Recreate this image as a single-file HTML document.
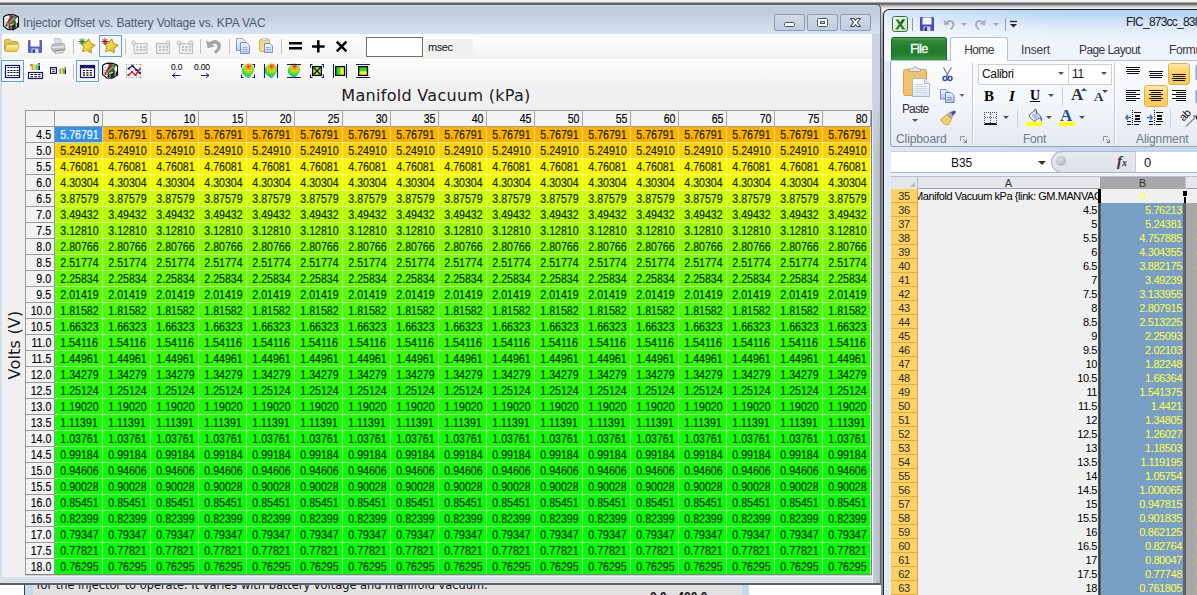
<!DOCTYPE html>
<html><head><meta charset="utf-8"><title>Injector Offset</title>
<style>
*{box-sizing:border-box;margin:0;padding:0}
html,body{width:1197px;height:595px;overflow:hidden;background:#f1f1f1;font-family:"Liberation Sans",sans-serif;font-size:12px;color:#000}
.abs{position:absolute}
#lw{position:absolute;left:-1px;top:3px;width:882px;height:582px;background:#5c6063;border-radius:0 5px 0 0;}
#lwin{position:absolute;left:0;top:5px;width:880px;height:578px;border-radius:0 4px 0 0;background:linear-gradient(#dde4ed 0,#c2ccdb 1.500px,#bfcdd9 8px,#c8d4e2 15px,#d1dce9 22px,#d7e3f0 29px,#d3deeb 30px,#d5e0ed 100%);}
#ltitle{position:absolute;left:23px;top:11px;font-size:12px;color:#4a5a72;letter-spacing:-0.15px;white-space:nowrap}
.wb{position:absolute;top:9px;width:31px;height:17px;border:1px solid #8a9bb4;border-radius:2px;background:linear-gradient(#cfdae8,#c0cee0)}
#lclient{position:absolute;left:2px;top:29px;width:870px;height:543px;background:#f0f0f0}
#tb1{position:absolute;left:0;top:0;width:870px;height:25px;background:linear-gradient(#fdfdfd,#f3f3f3)}
#tb2{position:absolute;left:0;top:25px;width:870px;height:25px;background:linear-gradient(#fdfdfd,#f3f3f3)}
#mvtitle{position:absolute;left:-1.500px;width:871px;top:52px;letter-spacing:0.3px;text-align:center;font-family:"DejaVu Sans",sans-serif;font-size:16px;color:#1a1a1a}
#volts{position:absolute;left:-27px;top:301px;letter-spacing:0.2px;width:80px;height:20px;text-align:center;transform:rotate(-90deg);font-family:"DejaVu Sans",sans-serif;font-size:16px;color:#1a1a1a;white-space:nowrap}
#grid{position:absolute;left:23px;top:76px;width:846px;height:465px;border-left:1px solid #9a9a9a;border-top:1px solid #9a9a9a;background:#f0f0f0}
.hr,.r{display:flex;height:16px}
.rl{width:29px;height:16px;border-right:1px solid #9a9a9a;border-bottom:1px solid #9a9a9a;background:#f2f2f2;text-align:right;padding-right:3px;line-height:15px;font-size:12px;letter-spacing:-0.2px}
.ch{width:48px;height:16px;border-right:1px solid #a8a8a8;border-bottom:1px solid #9a9a9a;text-align:right;padding-right:3px;line-height:15px;font-size:12px;background:#f4f4f4}
.c{width:48px;height:16px;border-right:1px solid rgba(255,255,255,.62);border-bottom:1px solid rgba(255,255,255,.62);text-align:center;line-height:15px;font-size:12px;letter-spacing:-0.25px;color:#0a1a00;padding-left:1px}
#grid b{display:inline-block;font-weight:normal;font-size:13px;transform:scaleX(.815);transform-origin:50% 50%;letter-spacing:0;-webkit-text-stroke:0.15px currentColor}
.rl b,.ch b{transform-origin:100% 50% !important}
.c.sel{background:#3390ea;color:#fff}
#below{position:absolute;left:0;top:585px;width:881px;height:10px;background:#fff;overflow:hidden}
/* excel */
#xw{position:absolute;left:883px;top:9px;width:330px;height:600px;background:#1e242c;border-radius:6px 0 0 0}
#xwin{position:absolute;left:884px;top:10px;width:330px;height:600px;border-radius:5px 0 0 0;background:linear-gradient(90deg,rgba(255,255,255,.45) 0,rgba(255,255,255,0) 190px),linear-gradient(#b3d1f4 0,#bcd7f5 5px,#d3e4f8 13px,#e6effa 22px,#eef4fb 32px,#eef4fb 50px,#c3d9f1 52px,#c0d8f0 100%)}
.xr{position:absolute;left:891px;width:306px;height:14px}
.xn{position:absolute;left:0;top:0;width:27px;height:14px;background:#fcd265;border-bottom:1px solid #dfae45;border-right:1px solid #d9a43a;text-align:center;font-size:11px;line-height:14px;color:#2a2a2a;letter-spacing:-0.3px}
.xa{position:absolute;left:27px;top:0;width:180px;height:14px;background:#f0f0f0;text-align:right;font-size:11px;line-height:14px;white-space:nowrap;overflow:hidden;letter-spacing:-0.4px;padding-right:1px}
.xb{position:absolute;left:207px;top:0;width:99px;height:14px;background:#a8a8a8;}
.xb b{position:absolute;left:0;top:0;width:85px;height:14px;background:#7a9fc6;color:#ffff3c;text-align:right;font-weight:normal;font-size:11px;line-height:14px;letter-spacing:-0.4px;padding-right:1px}
.xb i{position:absolute;left:98.500px;top:0;font-style:normal;font-size:11px;line-height:14px;color:#ffff3c;letter-spacing:-0.4px;-webkit-text-stroke:0.4px #ffff3c}
.xr.first .xb{background:#f0f0f0}
.xr.first .xb b{background:#f0f0f0;text-align:center;padding-left:5px;padding-right:0}
.xb b{position:absolute;left:0;top:0;width:85px;height:14px;background:#7a9fc6;color:#ffff3c;text-align:right;font-weight:normal;font-size:11px;line-height:14px;letter-spacing:-0.4px;padding-right:1px}
.xr.first .xa{text-align:left;text-indent:-4px;letter-spacing:-0.42px}

#xtitle{position:absolute;left:1126px;top:15px;font-size:12px;color:#1a1a1a;white-space:nowrap;letter-spacing:-0.78px}
#xfile{position:absolute;left:891px;top:37px;width:56px;height:23px;border-radius:3px 3px 0 0;background:linear-gradient(#55a557 0,#2f8a38 3px,#1f7a2c 12px,#237f30 16px,#3c9a44 23px);border:1px solid #1c6a27;border-bottom:none;color:#fff;font-size:12px;font-weight:normal;text-align:center;line-height:23px;letter-spacing:-0.45px;-webkit-text-stroke:0.35px #fff}
#xhome{position:absolute;left:950px;top:37px;width:58px;height:24px;border-radius:3px 3px 0 0;background:#fafcfe;border:1px solid #b4c2d3;border-bottom:none;color:#3a3a3a;font-size:12px;text-align:center;line-height:24px;letter-spacing:-0.6px}
.xtab{position:absolute;top:39px;color:#3a3a3a;font-size:12px;line-height:22px;white-space:nowrap;letter-spacing:0.15px}
#ribbon{position:absolute;left:890px;top:60px;width:320px;height:87px;border:1px solid #98a3b3;border-top-color:#b4c2d3;border-radius:3px 0 0 3px;background:linear-gradient(#fbfcfe 0,#f3f6fa 40px,#e8edf4 75px,#e3e9f1 87px)}
.gsep{position:absolute;top:63px;width:2px;height:82px;background:linear-gradient(90deg,#c3cad4 50%,#fff 50%)}
.glab{position:absolute;top:131.500px;font-size:12px;color:#6e7888;line-height:15px;letter-spacing:0.25px;white-space:nowrap}
.combo{position:absolute;top:64px;height:21px;border:1px solid #c9d0da;background:#fff;font-size:12px;line-height:19px;padding-left:3px;color:#111;letter-spacing:-0.34px}
.darr{position:absolute;width:0;height:0;border-left:3px solid transparent;border-right:3px solid transparent;border-top:3px solid #555}
.hl{position:absolute;border:1px solid #e3b14a;border-radius:3px;background:linear-gradient(#fde9a9,#fdd36a 40%,#fcc94f)}
.ln{position:absolute;height:1px;background:#111}
#fbar{position:absolute;left:891px;top:151px;width:320px;height:22px;background:#fff;border-top:1px solid #c9d2de;border-bottom:1px solid #a9b4c3}
#pill{position:absolute;left:1051px;top:151px;width:85px;height:22px;background:linear-gradient(#e6e9ee,#dde1e8);border:1px solid #aeb6c3;border-right:1px solid #c8ccd4;border-radius:11px 0 0 11px}
#colh{position:absolute;left:891px;top:176px;width:320px;height:13px;background:#e4e6ea;border-top:1px solid #b9c0cb;border-bottom:1px solid #9aa3b0}
#desc{position:absolute;left:3.500px;top:-7px;font-family:"DejaVu Sans",sans-serif;font-size:11.4px;line-height:14px;white-space:nowrap;color:#111}
</style></head><body>
<!-- top dark line -->
<div class="abs" style="left:0;top:2px;width:1197px;height:3px;background:linear-gradient(#dcdcdc,#5c6063 40%,#64686b 70%,#8a8e92)"></div>
<div class="abs" style="left:881px;top:5px;width:316px;height:5px;background:linear-gradient(#9a9a9a,#d4d4d4 40%,#f6f6f6 80%,#fafafa)"></div>
<div id="lw"></div>
<div id="lwin">
 <div id="ltitle">Injector Offset vs. Battery Voltage vs. KPA VAC</div>
 <div class="wb" style="left:774px"></div><div class="wb" style="left:807px"></div><div class="wb" style="left:840px"></div>
 <div id="lclient">
  <div id="tb1"></div><div id="tb2"></div>
  <div id="mvtitle">Manifold Vacuum (kPa)</div>
  <div id="volts">Volts (V)</div>
  <div id="grid">
<div class="hr"><div class="rl"></div><div class="ch"><b>0</b></div><div class="ch"><b>5</b></div><div class="ch"><b>10</b></div><div class="ch"><b>15</b></div><div class="ch"><b>20</b></div><div class="ch"><b>25</b></div><div class="ch"><b>30</b></div><div class="ch"><b>35</b></div><div class="ch"><b>40</b></div><div class="ch"><b>45</b></div><div class="ch"><b>50</b></div><div class="ch"><b>55</b></div><div class="ch"><b>60</b></div><div class="ch"><b>65</b></div><div class="ch"><b>70</b></div><div class="ch"><b>75</b></div><div class="ch"><b>80</b></div></div>
<div class="r" style="background:#ffb300"><div class="rl"><b>4.5</b></div><div class="c sel"><b>5.76791</b></div><div class="c"><b>5.76791</b></div><div class="c"><b>5.76791</b></div><div class="c"><b>5.76791</b></div><div class="c"><b>5.76791</b></div><div class="c"><b>5.76791</b></div><div class="c"><b>5.76791</b></div><div class="c"><b>5.76791</b></div><div class="c"><b>5.76791</b></div><div class="c"><b>5.76791</b></div><div class="c"><b>5.76791</b></div><div class="c"><b>5.76791</b></div><div class="c"><b>5.76791</b></div><div class="c"><b>5.76791</b></div><div class="c"><b>5.76791</b></div><div class="c"><b>5.76791</b></div><div class="c"><b>5.76791</b></div></div>
<div class="r" style="background:#ffd500"><div class="rl"><b>5.0</b></div><div class="c"><b>5.24910</b></div><div class="c"><b>5.24910</b></div><div class="c"><b>5.24910</b></div><div class="c"><b>5.24910</b></div><div class="c"><b>5.24910</b></div><div class="c"><b>5.24910</b></div><div class="c"><b>5.24910</b></div><div class="c"><b>5.24910</b></div><div class="c"><b>5.24910</b></div><div class="c"><b>5.24910</b></div><div class="c"><b>5.24910</b></div><div class="c"><b>5.24910</b></div><div class="c"><b>5.24910</b></div><div class="c"><b>5.24910</b></div><div class="c"><b>5.24910</b></div><div class="c"><b>5.24910</b></div><div class="c"><b>5.24910</b></div></div>
<div class="r" style="background:#fff500"><div class="rl"><b>5.5</b></div><div class="c"><b>4.76081</b></div><div class="c"><b>4.76081</b></div><div class="c"><b>4.76081</b></div><div class="c"><b>4.76081</b></div><div class="c"><b>4.76081</b></div><div class="c"><b>4.76081</b></div><div class="c"><b>4.76081</b></div><div class="c"><b>4.76081</b></div><div class="c"><b>4.76081</b></div><div class="c"><b>4.76081</b></div><div class="c"><b>4.76081</b></div><div class="c"><b>4.76081</b></div><div class="c"><b>4.76081</b></div><div class="c"><b>4.76081</b></div><div class="c"><b>4.76081</b></div><div class="c"><b>4.76081</b></div><div class="c"><b>4.76081</b></div></div>
<div class="r" style="background:#eaff00"><div class="rl"><b>6.0</b></div><div class="c"><b>4.30304</b></div><div class="c"><b>4.30304</b></div><div class="c"><b>4.30304</b></div><div class="c"><b>4.30304</b></div><div class="c"><b>4.30304</b></div><div class="c"><b>4.30304</b></div><div class="c"><b>4.30304</b></div><div class="c"><b>4.30304</b></div><div class="c"><b>4.30304</b></div><div class="c"><b>4.30304</b></div><div class="c"><b>4.30304</b></div><div class="c"><b>4.30304</b></div><div class="c"><b>4.30304</b></div><div class="c"><b>4.30304</b></div><div class="c"><b>4.30304</b></div><div class="c"><b>4.30304</b></div><div class="c"><b>4.30304</b></div></div>
<div class="r" style="background:#ceff00"><div class="rl"><b>6.5</b></div><div class="c"><b>3.87579</b></div><div class="c"><b>3.87579</b></div><div class="c"><b>3.87579</b></div><div class="c"><b>3.87579</b></div><div class="c"><b>3.87579</b></div><div class="c"><b>3.87579</b></div><div class="c"><b>3.87579</b></div><div class="c"><b>3.87579</b></div><div class="c"><b>3.87579</b></div><div class="c"><b>3.87579</b></div><div class="c"><b>3.87579</b></div><div class="c"><b>3.87579</b></div><div class="c"><b>3.87579</b></div><div class="c"><b>3.87579</b></div><div class="c"><b>3.87579</b></div><div class="c"><b>3.87579</b></div><div class="c"><b>3.87579</b></div></div>
<div class="r" style="background:#b5ff00"><div class="rl"><b>7.0</b></div><div class="c"><b>3.49432</b></div><div class="c"><b>3.49432</b></div><div class="c"><b>3.49432</b></div><div class="c"><b>3.49432</b></div><div class="c"><b>3.49432</b></div><div class="c"><b>3.49432</b></div><div class="c"><b>3.49432</b></div><div class="c"><b>3.49432</b></div><div class="c"><b>3.49432</b></div><div class="c"><b>3.49432</b></div><div class="c"><b>3.49432</b></div><div class="c"><b>3.49432</b></div><div class="c"><b>3.49432</b></div><div class="c"><b>3.49432</b></div><div class="c"><b>3.49432</b></div><div class="c"><b>3.49432</b></div><div class="c"><b>3.49432</b></div></div>
<div class="r" style="background:#9dff00"><div class="rl"><b>7.5</b></div><div class="c"><b>3.12810</b></div><div class="c"><b>3.12810</b></div><div class="c"><b>3.12810</b></div><div class="c"><b>3.12810</b></div><div class="c"><b>3.12810</b></div><div class="c"><b>3.12810</b></div><div class="c"><b>3.12810</b></div><div class="c"><b>3.12810</b></div><div class="c"><b>3.12810</b></div><div class="c"><b>3.12810</b></div><div class="c"><b>3.12810</b></div><div class="c"><b>3.12810</b></div><div class="c"><b>3.12810</b></div><div class="c"><b>3.12810</b></div><div class="c"><b>3.12810</b></div><div class="c"><b>3.12810</b></div><div class="c"><b>3.12810</b></div></div>
<div class="r" style="background:#87ff00"><div class="rl"><b>8.0</b></div><div class="c"><b>2.80766</b></div><div class="c"><b>2.80766</b></div><div class="c"><b>2.80766</b></div><div class="c"><b>2.80766</b></div><div class="c"><b>2.80766</b></div><div class="c"><b>2.80766</b></div><div class="c"><b>2.80766</b></div><div class="c"><b>2.80766</b></div><div class="c"><b>2.80766</b></div><div class="c"><b>2.80766</b></div><div class="c"><b>2.80766</b></div><div class="c"><b>2.80766</b></div><div class="c"><b>2.80766</b></div><div class="c"><b>2.80766</b></div><div class="c"><b>2.80766</b></div><div class="c"><b>2.80766</b></div><div class="c"><b>2.80766</b></div></div>
<div class="r" style="background:#74ff00"><div class="rl"><b>8.5</b></div><div class="c"><b>2.51774</b></div><div class="c"><b>2.51774</b></div><div class="c"><b>2.51774</b></div><div class="c"><b>2.51774</b></div><div class="c"><b>2.51774</b></div><div class="c"><b>2.51774</b></div><div class="c"><b>2.51774</b></div><div class="c"><b>2.51774</b></div><div class="c"><b>2.51774</b></div><div class="c"><b>2.51774</b></div><div class="c"><b>2.51774</b></div><div class="c"><b>2.51774</b></div><div class="c"><b>2.51774</b></div><div class="c"><b>2.51774</b></div><div class="c"><b>2.51774</b></div><div class="c"><b>2.51774</b></div><div class="c"><b>2.51774</b></div></div>
<div class="r" style="background:#63ff00"><div class="rl"><b>9.0</b></div><div class="c"><b>2.25834</b></div><div class="c"><b>2.25834</b></div><div class="c"><b>2.25834</b></div><div class="c"><b>2.25834</b></div><div class="c"><b>2.25834</b></div><div class="c"><b>2.25834</b></div><div class="c"><b>2.25834</b></div><div class="c"><b>2.25834</b></div><div class="c"><b>2.25834</b></div><div class="c"><b>2.25834</b></div><div class="c"><b>2.25834</b></div><div class="c"><b>2.25834</b></div><div class="c"><b>2.25834</b></div><div class="c"><b>2.25834</b></div><div class="c"><b>2.25834</b></div><div class="c"><b>2.25834</b></div><div class="c"><b>2.25834</b></div></div>
<div class="r" style="background:#53ff00"><div class="rl"><b>9.5</b></div><div class="c"><b>2.01419</b></div><div class="c"><b>2.01419</b></div><div class="c"><b>2.01419</b></div><div class="c"><b>2.01419</b></div><div class="c"><b>2.01419</b></div><div class="c"><b>2.01419</b></div><div class="c"><b>2.01419</b></div><div class="c"><b>2.01419</b></div><div class="c"><b>2.01419</b></div><div class="c"><b>2.01419</b></div><div class="c"><b>2.01419</b></div><div class="c"><b>2.01419</b></div><div class="c"><b>2.01419</b></div><div class="c"><b>2.01419</b></div><div class="c"><b>2.01419</b></div><div class="c"><b>2.01419</b></div><div class="c"><b>2.01419</b></div></div>
<div class="r" style="background:#46ff00"><div class="rl"><b>10.0</b></div><div class="c"><b>1.81582</b></div><div class="c"><b>1.81582</b></div><div class="c"><b>1.81582</b></div><div class="c"><b>1.81582</b></div><div class="c"><b>1.81582</b></div><div class="c"><b>1.81582</b></div><div class="c"><b>1.81582</b></div><div class="c"><b>1.81582</b></div><div class="c"><b>1.81582</b></div><div class="c"><b>1.81582</b></div><div class="c"><b>1.81582</b></div><div class="c"><b>1.81582</b></div><div class="c"><b>1.81582</b></div><div class="c"><b>1.81582</b></div><div class="c"><b>1.81582</b></div><div class="c"><b>1.81582</b></div><div class="c"><b>1.81582</b></div></div>
<div class="r" style="background:#3cff00"><div class="rl"><b>10.5</b></div><div class="c"><b>1.66323</b></div><div class="c"><b>1.66323</b></div><div class="c"><b>1.66323</b></div><div class="c"><b>1.66323</b></div><div class="c"><b>1.66323</b></div><div class="c"><b>1.66323</b></div><div class="c"><b>1.66323</b></div><div class="c"><b>1.66323</b></div><div class="c"><b>1.66323</b></div><div class="c"><b>1.66323</b></div><div class="c"><b>1.66323</b></div><div class="c"><b>1.66323</b></div><div class="c"><b>1.66323</b></div><div class="c"><b>1.66323</b></div><div class="c"><b>1.66323</b></div><div class="c"><b>1.66323</b></div><div class="c"><b>1.66323</b></div></div>
<div class="r" style="background:#34ff00"><div class="rl"><b>11.0</b></div><div class="c"><b>1.54116</b></div><div class="c"><b>1.54116</b></div><div class="c"><b>1.54116</b></div><div class="c"><b>1.54116</b></div><div class="c"><b>1.54116</b></div><div class="c"><b>1.54116</b></div><div class="c"><b>1.54116</b></div><div class="c"><b>1.54116</b></div><div class="c"><b>1.54116</b></div><div class="c"><b>1.54116</b></div><div class="c"><b>1.54116</b></div><div class="c"><b>1.54116</b></div><div class="c"><b>1.54116</b></div><div class="c"><b>1.54116</b></div><div class="c"><b>1.54116</b></div><div class="c"><b>1.54116</b></div><div class="c"><b>1.54116</b></div></div>
<div class="r" style="background:#2dff00"><div class="rl"><b>11.5</b></div><div class="c"><b>1.44961</b></div><div class="c"><b>1.44961</b></div><div class="c"><b>1.44961</b></div><div class="c"><b>1.44961</b></div><div class="c"><b>1.44961</b></div><div class="c"><b>1.44961</b></div><div class="c"><b>1.44961</b></div><div class="c"><b>1.44961</b></div><div class="c"><b>1.44961</b></div><div class="c"><b>1.44961</b></div><div class="c"><b>1.44961</b></div><div class="c"><b>1.44961</b></div><div class="c"><b>1.44961</b></div><div class="c"><b>1.44961</b></div><div class="c"><b>1.44961</b></div><div class="c"><b>1.44961</b></div><div class="c"><b>1.44961</b></div></div>
<div class="r" style="background:#26ff00"><div class="rl"><b>12.0</b></div><div class="c"><b>1.34279</b></div><div class="c"><b>1.34279</b></div><div class="c"><b>1.34279</b></div><div class="c"><b>1.34279</b></div><div class="c"><b>1.34279</b></div><div class="c"><b>1.34279</b></div><div class="c"><b>1.34279</b></div><div class="c"><b>1.34279</b></div><div class="c"><b>1.34279</b></div><div class="c"><b>1.34279</b></div><div class="c"><b>1.34279</b></div><div class="c"><b>1.34279</b></div><div class="c"><b>1.34279</b></div><div class="c"><b>1.34279</b></div><div class="c"><b>1.34279</b></div><div class="c"><b>1.34279</b></div><div class="c"><b>1.34279</b></div></div>
<div class="r" style="background:#20ff00"><div class="rl"><b>12.5</b></div><div class="c"><b>1.25124</b></div><div class="c"><b>1.25124</b></div><div class="c"><b>1.25124</b></div><div class="c"><b>1.25124</b></div><div class="c"><b>1.25124</b></div><div class="c"><b>1.25124</b></div><div class="c"><b>1.25124</b></div><div class="c"><b>1.25124</b></div><div class="c"><b>1.25124</b></div><div class="c"><b>1.25124</b></div><div class="c"><b>1.25124</b></div><div class="c"><b>1.25124</b></div><div class="c"><b>1.25124</b></div><div class="c"><b>1.25124</b></div><div class="c"><b>1.25124</b></div><div class="c"><b>1.25124</b></div><div class="c"><b>1.25124</b></div></div>
<div class="r" style="background:#1cff00"><div class="rl"><b>13.0</b></div><div class="c"><b>1.19020</b></div><div class="c"><b>1.19020</b></div><div class="c"><b>1.19020</b></div><div class="c"><b>1.19020</b></div><div class="c"><b>1.19020</b></div><div class="c"><b>1.19020</b></div><div class="c"><b>1.19020</b></div><div class="c"><b>1.19020</b></div><div class="c"><b>1.19020</b></div><div class="c"><b>1.19020</b></div><div class="c"><b>1.19020</b></div><div class="c"><b>1.19020</b></div><div class="c"><b>1.19020</b></div><div class="c"><b>1.19020</b></div><div class="c"><b>1.19020</b></div><div class="c"><b>1.19020</b></div><div class="c"><b>1.19020</b></div></div>
<div class="r" style="background:#17ff00"><div class="rl"><b>13.5</b></div><div class="c"><b>1.11391</b></div><div class="c"><b>1.11391</b></div><div class="c"><b>1.11391</b></div><div class="c"><b>1.11391</b></div><div class="c"><b>1.11391</b></div><div class="c"><b>1.11391</b></div><div class="c"><b>1.11391</b></div><div class="c"><b>1.11391</b></div><div class="c"><b>1.11391</b></div><div class="c"><b>1.11391</b></div><div class="c"><b>1.11391</b></div><div class="c"><b>1.11391</b></div><div class="c"><b>1.11391</b></div><div class="c"><b>1.11391</b></div><div class="c"><b>1.11391</b></div><div class="c"><b>1.11391</b></div><div class="c"><b>1.11391</b></div></div>
<div class="r" style="background:#12ff00"><div class="rl"><b>14.0</b></div><div class="c"><b>1.03761</b></div><div class="c"><b>1.03761</b></div><div class="c"><b>1.03761</b></div><div class="c"><b>1.03761</b></div><div class="c"><b>1.03761</b></div><div class="c"><b>1.03761</b></div><div class="c"><b>1.03761</b></div><div class="c"><b>1.03761</b></div><div class="c"><b>1.03761</b></div><div class="c"><b>1.03761</b></div><div class="c"><b>1.03761</b></div><div class="c"><b>1.03761</b></div><div class="c"><b>1.03761</b></div><div class="c"><b>1.03761</b></div><div class="c"><b>1.03761</b></div><div class="c"><b>1.03761</b></div><div class="c"><b>1.03761</b></div></div>
<div class="r" style="background:#0fff00"><div class="rl"><b>14.5</b></div><div class="c"><b>0.99184</b></div><div class="c"><b>0.99184</b></div><div class="c"><b>0.99184</b></div><div class="c"><b>0.99184</b></div><div class="c"><b>0.99184</b></div><div class="c"><b>0.99184</b></div><div class="c"><b>0.99184</b></div><div class="c"><b>0.99184</b></div><div class="c"><b>0.99184</b></div><div class="c"><b>0.99184</b></div><div class="c"><b>0.99184</b></div><div class="c"><b>0.99184</b></div><div class="c"><b>0.99184</b></div><div class="c"><b>0.99184</b></div><div class="c"><b>0.99184</b></div><div class="c"><b>0.99184</b></div><div class="c"><b>0.99184</b></div></div>
<div class="r" style="background:#0cff00"><div class="rl"><b>15.0</b></div><div class="c"><b>0.94606</b></div><div class="c"><b>0.94606</b></div><div class="c"><b>0.94606</b></div><div class="c"><b>0.94606</b></div><div class="c"><b>0.94606</b></div><div class="c"><b>0.94606</b></div><div class="c"><b>0.94606</b></div><div class="c"><b>0.94606</b></div><div class="c"><b>0.94606</b></div><div class="c"><b>0.94606</b></div><div class="c"><b>0.94606</b></div><div class="c"><b>0.94606</b></div><div class="c"><b>0.94606</b></div><div class="c"><b>0.94606</b></div><div class="c"><b>0.94606</b></div><div class="c"><b>0.94606</b></div><div class="c"><b>0.94606</b></div></div>
<div class="r" style="background:#09ff00"><div class="rl"><b>15.5</b></div><div class="c"><b>0.90028</b></div><div class="c"><b>0.90028</b></div><div class="c"><b>0.90028</b></div><div class="c"><b>0.90028</b></div><div class="c"><b>0.90028</b></div><div class="c"><b>0.90028</b></div><div class="c"><b>0.90028</b></div><div class="c"><b>0.90028</b></div><div class="c"><b>0.90028</b></div><div class="c"><b>0.90028</b></div><div class="c"><b>0.90028</b></div><div class="c"><b>0.90028</b></div><div class="c"><b>0.90028</b></div><div class="c"><b>0.90028</b></div><div class="c"><b>0.90028</b></div><div class="c"><b>0.90028</b></div><div class="c"><b>0.90028</b></div></div>
<div class="r" style="background:#06ff00"><div class="rl"><b>16.0</b></div><div class="c"><b>0.85451</b></div><div class="c"><b>0.85451</b></div><div class="c"><b>0.85451</b></div><div class="c"><b>0.85451</b></div><div class="c"><b>0.85451</b></div><div class="c"><b>0.85451</b></div><div class="c"><b>0.85451</b></div><div class="c"><b>0.85451</b></div><div class="c"><b>0.85451</b></div><div class="c"><b>0.85451</b></div><div class="c"><b>0.85451</b></div><div class="c"><b>0.85451</b></div><div class="c"><b>0.85451</b></div><div class="c"><b>0.85451</b></div><div class="c"><b>0.85451</b></div><div class="c"><b>0.85451</b></div><div class="c"><b>0.85451</b></div></div>
<div class="r" style="background:#04ff00"><div class="rl"><b>16.5</b></div><div class="c"><b>0.82399</b></div><div class="c"><b>0.82399</b></div><div class="c"><b>0.82399</b></div><div class="c"><b>0.82399</b></div><div class="c"><b>0.82399</b></div><div class="c"><b>0.82399</b></div><div class="c"><b>0.82399</b></div><div class="c"><b>0.82399</b></div><div class="c"><b>0.82399</b></div><div class="c"><b>0.82399</b></div><div class="c"><b>0.82399</b></div><div class="c"><b>0.82399</b></div><div class="c"><b>0.82399</b></div><div class="c"><b>0.82399</b></div><div class="c"><b>0.82399</b></div><div class="c"><b>0.82399</b></div><div class="c"><b>0.82399</b></div></div>
<div class="r" style="background:#02ff00"><div class="rl"><b>17.0</b></div><div class="c"><b>0.79347</b></div><div class="c"><b>0.79347</b></div><div class="c"><b>0.79347</b></div><div class="c"><b>0.79347</b></div><div class="c"><b>0.79347</b></div><div class="c"><b>0.79347</b></div><div class="c"><b>0.79347</b></div><div class="c"><b>0.79347</b></div><div class="c"><b>0.79347</b></div><div class="c"><b>0.79347</b></div><div class="c"><b>0.79347</b></div><div class="c"><b>0.79347</b></div><div class="c"><b>0.79347</b></div><div class="c"><b>0.79347</b></div><div class="c"><b>0.79347</b></div><div class="c"><b>0.79347</b></div><div class="c"><b>0.79347</b></div></div>
<div class="r" style="background:#01ff00"><div class="rl"><b>17.5</b></div><div class="c"><b>0.77821</b></div><div class="c"><b>0.77821</b></div><div class="c"><b>0.77821</b></div><div class="c"><b>0.77821</b></div><div class="c"><b>0.77821</b></div><div class="c"><b>0.77821</b></div><div class="c"><b>0.77821</b></div><div class="c"><b>0.77821</b></div><div class="c"><b>0.77821</b></div><div class="c"><b>0.77821</b></div><div class="c"><b>0.77821</b></div><div class="c"><b>0.77821</b></div><div class="c"><b>0.77821</b></div><div class="c"><b>0.77821</b></div><div class="c"><b>0.77821</b></div><div class="c"><b>0.77821</b></div><div class="c"><b>0.77821</b></div></div>
<div class="r" style="background:#00ff00"><div class="rl"><b>18.0</b></div><div class="c"><b>0.76295</b></div><div class="c"><b>0.76295</b></div><div class="c"><b>0.76295</b></div><div class="c"><b>0.76295</b></div><div class="c"><b>0.76295</b></div><div class="c"><b>0.76295</b></div><div class="c"><b>0.76295</b></div><div class="c"><b>0.76295</b></div><div class="c"><b>0.76295</b></div><div class="c"><b>0.76295</b></div><div class="c"><b>0.76295</b></div><div class="c"><b>0.76295</b></div><div class="c"><b>0.76295</b></div><div class="c"><b>0.76295</b></div><div class="c"><b>0.76295</b></div><div class="c"><b>0.76295</b></div><div class="c"><b>0.76295</b></div></div>
  </div>
 </div>
</div>
<svg class="abs" style="left:0;top:0" width="880" height="90" viewBox="0 0 880 90">
<defs>
<linearGradient id="gfold" x1="0" y1="0" x2="0" y2="1"><stop offset="0" stop-color="#fdf1a8"/><stop offset="1" stop-color="#eec64a"/></linearGradient>
<linearGradient id="gstar" x1="0" y1="0" x2="1" y2="1"><stop offset="0" stop-color="#fff27a"/><stop offset=".6" stop-color="#f3cf2a"/><stop offset="1" stop-color="#b98f10"/></linearGradient>
<linearGradient id="gdoc" x1="0" y1="0" x2="0" y2="1"><stop offset="0" stop-color="#f4f8ff"/><stop offset="1" stop-color="#b9cdf5"/></linearGradient>
<radialGradient id="gsurf" cx=".55" cy=".2" r=".8"><stop offset="0" stop-color="#e03010"/><stop offset=".25" stop-color="#f0b020"/><stop offset=".45" stop-color="#b8e020"/><stop offset=".7" stop-color="#38d838"/><stop offset="1" stop-color="#20c0b0"/></radialGradient>
<linearGradient id="ggy" x1="0" y1="0" x2="1" y2="0"><stop offset="0" stop-color="#10d010"/><stop offset=".45" stop-color="#30e020"/><stop offset=".6" stop-color="#f0f020"/><stop offset="1" stop-color="#ffff30"/></linearGradient>
<linearGradient id="ggy2" x1="0" y1="0" x2="0" y2="1"><stop offset="0" stop-color="#10d010"/><stop offset=".45" stop-color="#30e020"/><stop offset=".6" stop-color="#f0f020"/><stop offset="1" stop-color="#ffff30"/></linearGradient>
<g id="star"><path d="M9.7 1.2 L11.3 5.6 L15.8 7.0 L12.0 9.9 L12.1 14.7 L8.2 12.0 L3.7 13.5 L5.1 8.9 L2.2 5.1 L7.0 5.0Z" fill="url(#gstar)" stroke="#b8921a" stroke-width="1.300" stroke-linejoin="round"/><path d="M9.7 1.2 L11.3 5.6 L15.8 7.0 L12.0 9.9 L12.1 14.7 L8.2 12.0 L3.7 13.5 L5.1 8.9 L2.2 5.1 L7.0 5.0Z" fill="none" stroke="#fff6a0" stroke-width=".5" stroke-linejoin="round" transform="translate(1.300,1.300) scale(.85)" opacity=".7"/></g>
<g id="spark"><path d="M3 -.5v7M-.5 3h7M.6 .6l4.800 4.800M5.400 .6L.6 5.400" stroke-width="1" fill="none"/></g>
<g id="dgrid"><rect x=".5" y=".5" width="13" height="10" fill="#ececec" stroke="#bdbdbd"/><path d="M3 4h2M6.5 4h2M10 4h2M3 7h2M6.5 7h2M10 7h2" stroke="#b4b4b4" stroke-width="1.4"/></g>
<g id="dspark"><path d="M3 0v6M0 3h6M.9 .9l4.2 4.2M5.1 .9L.9 5.1" stroke="#c4c4c4" stroke-width=".9" fill="none"/><circle cx="3" cy="3" r="1.3" fill="#f4f4f4" stroke="#c0c0c0" stroke-width=".6"/></g>
<g id="tbl"><path d="M2.2 2.7h2M5.2 2.7h2M8.2 2.7h2M11.2 2.7h2M2.2 5.7h2M5.2 5.7h2M8.2 5.7h2M11.2 5.7h2M2.2 7.7h2M5.2 7.7h2M8.2 7.7h2M11.2 7.7h2M2.2 10.7h2M5.2 10.7h2M8.2 10.7h2M11.2 10.7h2" stroke="#000" stroke-width="1"/></g>
<g id="surf"><path d="M7 0.5 C10 0.2 13 2 13.2 6 C13.2 9 11 11.5 8.5 14.5 L7.6 15.5 C5 13.5 1.2 12 .8 8.5 C.6 4.5 3.5 1 7 .5Z" fill="url(#gsurf)"/></g>
</defs>
<!-- row 1 -->
<!-- folder -->
<path d="M4.5 41.5 Q4.5 39.5 6.5 39.5 L10 39.5 L11.5 41.5 L16.5 41.5 Q18 41.5 18 43 L18 44 L8 44 Q6.5 44 6 45.5 L4.5 50 Z" fill="#e9c85a" stroke="#b8921e" stroke-width=".8"/>
<path d="M7.5 44.2 L18.2 44.2 Q19.4 44.2 19 45.4 L17.6 50.2 Q17.3 51.4 16 51.4 L5.8 51.4 Q4.4 51.4 4.8 50.2 L6.3 45.2 Q6.6 44.2 7.5 44.2Z" fill="url(#gfold)" stroke="#c39a22" stroke-width=".8"/>
<!-- floppy -->
<rect x="28" y="40" width="14" height="13" rx="1" fill="#5a5ec6"/>
<rect x="30.5" y="40" width="9" height="6.5" fill="#fbfbff"/>
<rect x="31.5" y="48.5" width="7" height="4.5" fill="#d8dcf2"/>
<rect x="32.5" y="49.3" width="2.6" height="3.7" fill="#3b3f9c"/>
<!-- printer -->
<path d="M54.5 38.5 L60 38.5 L62.5 45 L56 45 Z" fill="#cfe0f7" stroke="#9db4d6" stroke-width=".7"/>
<path d="M52 45.5 Q51.5 44.5 53 44.3 L62 43.5 Q64 43.5 64.6 45 L65 47.5 L65 50 L62.5 52.8 L55 53.2 L51.5 49.5 Z" fill="#c4c4c6" stroke="#8e8e92" stroke-width=".7"/>
<path d="M52 47.5 L64.5 46.8" stroke="#f4f4f4" stroke-width="1"/>
<path d="M54 51 L63.5 49.6" stroke="#777" stroke-width=".9"/>
<path d="M55.5 52.6 L63 51.3" stroke="#eee" stroke-width=".9"/>
<!-- separators -->
<path d="M73.5 39v15M125.5 39v15M200.5 39v15M229.5 39v15M281.5 39v15M73.5 64v15" stroke="#c2c2c2" stroke-width="1"/>
<!-- star 1 -->
<use href="#star" x="79" y="38"/>
<use href="#spark" x="79" y="38.5" stroke="#0f8a12"/>
<!-- star 2 highlighted -->
<rect x="99.5" y="35.5" width="22" height="21" fill="#f3f7fc" stroke="#5e9fe0"/>
<use href="#star" x="102" y="38"/>
<use href="#spark" x="102" y="38.5" stroke="#b01414"/>
<!-- disabled grids -->
<use href="#dgrid" x="133.500" y="43"/><use href="#dspark" x="130.500" y="40"/>
<use href="#dgrid" x="156" y="43"/><use href="#dspark" x="165" y="40"/>
<use href="#dgrid" x="179" y="43"/><use href="#dspark" x="176" y="40"/><use href="#dspark" x="188" y="40"/>
<!-- undo -->
<path d="M206 40 L207.600 48.300 L215.300 46.300 L212.300 44.400 Q215.300 42.600 217 45 Q218.600 48 213.600 51.800 L216.200 53.800 Q223.400 48 220 42.600 Q216.200 37.800 209.200 42.200 Z" fill="#a6a6a6"/>
<!-- copy -->
<path d="M236.500 38.500 h6 l3 3 v9 h-9z" fill="url(#gdoc)" stroke="#7f96c8" stroke-width=".9"/>
<path d="M240.500 42.500 h6 l3 3 v8 h-9z" fill="url(#gdoc)" stroke="#6f88c0" stroke-width=".9"/>
<path d="M242.500 47.500h5M242.500 49.500h5M242.500 51.500h5" stroke="#8aa2d8" stroke-width=".8"/>
<!-- paste -->
<rect x="259.500" y="39.500" width="10" height="12" rx="1.500" fill="#f6dc86" stroke="#cfa93a" stroke-width=".9"/>
<rect x="262" y="38.500" width="5" height="2.200" fill="#e9e9e9" stroke="#aaa" stroke-width=".5"/>
<path d="M264.500 43.500 h5.500 l2.500 2.500 v6.500 h-8z" fill="url(#gdoc)" stroke="#6f88c0" stroke-width=".9"/>
<path d="M266.200 47.500h4.500M266.200 49.500h4.500" stroke="#8aa2d8" stroke-width=".8"/>
<!-- = + x -->
<path d="M289 43.300h13M289 48.200h13" stroke="#000" stroke-width="2.500"/>
<path d="M312 46.400h12.600M318.300 40.300v12.200" stroke="#000" stroke-width="2.500"/>
<path d="M336.800 41.700l9.600 9.600M346.400 41.700l-9.600 9.600" stroke="#000" stroke-width="2.500"/>
<!-- row 2 -->
<rect x="1.500" y="60.500" width="22" height="21" fill="#f3f7fc" stroke="#5e9fe0"/>
<rect x="5.500" y="65.500" width="14" height="12" fill="#fff" stroke="#14146e" stroke-width="1.200"/>
<use href="#tbl" x="5.300" y="64.800"/>
<!-- bars + table -->
<rect x="30" y="64.500" width="3" height="1.200" fill="#c00000"/>
<rect x="31.500" y="64.500" width="2" height="5.500" fill="#e8a000"/><rect x="33.500" y="64" width="2" height="6" fill="#f0e020"/><rect x="35.500" y="64.500" width="2.200" height="5.500" fill="#20d0d0"/><rect x="38.300" y="65.500" width="1.600" height="4.500" fill="#101010"/><rect x="38.300" y="63.200" width="1.600" height="1.400" fill="#101010"/>
<rect x="28.500" y="72.500" width="14" height="6" fill="#fff" stroke="#14146e" stroke-width="1.200"/>
<path d="M30.500 74.500h2.500M34.300 74.500h2.500M38 74.500h2.500M30.500 76.800h2.500M34.300 76.800h2.500M38 76.800h2.500" stroke="#000" stroke-width="1.100"/>
<!-- small -->
<rect x="50.600" y="67.600" width="5.800" height="5.800" fill="#fff" stroke="#14146e" stroke-width="1.200"/>
<path d="M52.300 69.600h2.400M52.300 71.600h2.400" stroke="#000" stroke-width=".9"/>
<rect x="59.500" y="68.500" width="1.800" height="5.300" fill="#d09000"/><rect x="61.300" y="67.600" width="1.600" height="6.200" fill="#e8e030"/><rect x="62.900" y="68.500" width="1.600" height="5.300" fill="#20c890"/><rect x="64.700" y="69.300" width="1.300" height="4.500" fill="#101010"/><rect x="64.700" y="67.300" width="1.300" height="1.200" fill="#101010"/>
<!-- table 2 highlighted -->
<rect x="76.500" y="60.500" width="22" height="21" fill="#f3f7fc" stroke="#5e9fe0"/>
<rect x="80.500" y="65.500" width="14" height="12" fill="#fff" stroke="#14146e" stroke-width="1.200"/>
<rect x="80" y="65" width="15" height="3.300" fill="#14146e"/>
<path d="M82.800 70.500h2.200M86.300 70.500h2.200M89.800 70.500h2.200M82.800 72.800h2.200M86.300 72.800h2.200M89.800 72.800h2.200M82.800 75.200h2.200M86.300 75.200h2.200M89.800 75.200h2.200" stroke="#000" stroke-width="1.200"/>
<!-- cube icon -->
<g id="cube"><path d="M102.600 65.600 L104.800 64 L108 63.200 L113 63.400 L117.400 65.400 L117.500 75 L112.300 78.200 L107 78 L102.600 74.600Z" fill="#fdfdfd" stroke="#0a0a0a" stroke-width="1.200" stroke-linejoin="round"/>
<path d="M108.500 64 L113 64.200 L116.800 66 L114.500 67.500 L114.500 76 L112 77.500 L107.500 77.300 L106.500 75 L109 70 Z" fill="#5a5a5a"/>
<path d="M104.300 67.500h2.200M103.800 70.500h2M104 72.500h1.500" stroke="#9a9a9a" stroke-width=".8"/>
<path d="M110.800 64.300 L108.300 68.500 L105 74.800" stroke="#b81c1c" stroke-width="2" fill="none"/>
<path d="M113.800 66 L111.500 68 L109.300 70.600 M112.300 67 L113.800 68 M106 71.500 L107.300 74.500" stroke="#3cc83c" stroke-width="1.500" fill="none"/>
<path d="M109 73.500 L113.200 72.400" stroke="#ecec50" stroke-width="1.100"/>
<path d="M107.600 74.500v3M110 74v4M115.200 71v5" stroke="#a8a8a8" stroke-width="1.100"/>
<path d="M108.800 74.500v3.500M111.300 74v4M112.800 73v4.500M114 70v6.500M116.400 71.500v4.500" stroke="#101010" stroke-width="1"/>
<path d="M115.500 66.800 L117 66.200 L117 70.500 L115.600 71.300Z" fill="#fff"/></g>
<!-- chart icon -->
<path d="M126 64.500h15.500M126 77.500h15.500" stroke="#9a9a9a" stroke-width="1" stroke-dasharray="1 1.500"/>
<path d="M126.500 64v14M140.500 64v14" stroke="#9a9a9a" stroke-width="1" stroke-dasharray="1.200 1.300"/>
<path d="M128.500 68.500 L132.500 65.800 L136.500 70 L140.500 73.500" stroke="#141478" stroke-width="1.300" fill="none"/>
<path d="M128.500 75 L132 72 L135.500 75 L140.500 68" stroke="#d01818" stroke-width="1.300" fill="none"/>
<rect x="131.500" y="64.800" width="2" height="2" fill="#141478"/><rect x="127.700" y="67.700" width="2" height="2" fill="#141478"/><rect x="135.500" y="69" width="2" height="2" fill="#141478"/><rect x="138.800" y="72" width="2" height="2" fill="#141478"/>
<rect x="127.500" y="74" width="2" height="2" fill="#d01818"/><rect x="131" y="71" width="2" height="2" fill="#d01818"/><rect x="134.500" y="74" width="2" height="2" fill="#d01818"/>
<!-- arrows -->
<path d="M172.500 75.500h8M172.500 75.500l2.800-2.300M172.500 75.500l2.800 2.300" stroke="#1414b4" stroke-width="1" fill="none"/>
<path d="M201 75.500h8M209 75.500l-2.800-2.300M209 75.500l-2.800 2.300" stroke="#1414b4" stroke-width="1" fill="none"/>
<!-- surface icons -->
<use href="#surf" x="241" y="63"/>
<path d="M243.500 64.500h-2v3M252.500 64.500h2v3M243.500 77.500h-2v-3M252.500 77.500h2v-3" stroke="#1414a0" stroke-width="1.100" fill="none"/>
<use href="#surf" x="264" y="63"/>
<path d="M264.500 64v14M277.500 64v14" stroke="#1414a0" stroke-width="1.100"/>
<use href="#surf" x="287" y="63"/>
<path d="M287 64.500h14M287 77.500h14" stroke="#1414a0" stroke-width="1.100"/>
<!-- box X -->
<path d="M312.500 64.500h-2v3M321.500 64.500h2v3M312.500 77.500h-2v-3M321.500 77.500h2v-3" stroke="#1414a0" stroke-width="1.100" fill="none"/>
<rect x="312.600" y="66.600" width="8.800" height="8.800" fill="#b8f020" stroke="#000" stroke-width="1.300"/>
<path d="M313.500 67.500l7 7M320.500 67.500l-7 7" stroke="#000" stroke-width="1.100"/>
<!-- box LR -->
<path d="M333.500 64v14M346.500 64v14" stroke="#1414a0" stroke-width="1.100"/>
<rect x="335.700" y="66.600" width="8.800" height="8.800" fill="url(#ggy)" stroke="#000" stroke-width="1.300"/>
<!-- box TB -->
<path d="M356 64.500h14M356 77.500h14" stroke="#1414a0" stroke-width="1.100"/>
<rect x="358.700" y="66.600" width="8.800" height="8.800" fill="url(#ggy2)" stroke="#000" stroke-width="1.300"/>
<!-- title icon -->
<use href="#cube" transform="translate(-99,-48.500)"/>
<!-- window buttons glyphs -->
<rect x="784.500" y="22.500" width="10" height="4" rx="1" fill="#fff" stroke="#4d5560" stroke-width="1"/>
<rect x="817.500" y="18.500" width="10" height="8" rx="1" fill="#fff" stroke="#4d5560" stroke-width="1"/>
<rect x="820.500" y="21.500" width="4" height="2" fill="#c8d2e0" stroke="#4d5560" stroke-width="1"/>
<path d="M850.500 18.500 L854 18.500 L855.500 20.300 L857 18.500 L860.500 18.500 L857.400 22.500 L860.500 26.500 L857 26.500 L855.500 24.700 L854 26.500 L850.500 26.500 L853.600 22.500Z" fill="#fff" stroke="#454c58" stroke-width="1.100" stroke-linejoin="round"/>
</svg>
<div class="abs" style="left:366px;top:37px;width:57px;height:20px;background:#fff;border:1px solid #707070"></div>
<div class="abs" style="left:425px;top:39px;width:48px;height:17px;background:#f0f0f0"></div>
<div class="abs" style="left:428px;top:39px;font-size:11px;line-height:16px;letter-spacing:-0.45px;color:#111">msec</div>
<div class="abs" style="left:171px;top:62px;font-size:8.500px;line-height:10px;letter-spacing:-0.2px;color:#000">0.0</div>
<div class="abs" style="left:194px;top:62px;font-size:8.500px;line-height:10px;letter-spacing:-0.2px;color:#000">0.00</div>

<div class="abs" style="left:871px;top:110px;width:1px;height:465px;background:#7e7e7e"></div>
<div class="abs" style="left:25px;top:574px;width:847px;height:1px;background:#848484"></div>
<div class="abs" style="left:25px;top:575px;width:847px;height:1px;background:#d2d2d2"></div>
<div class="abs" style="left:872px;top:34px;width:8px;height:549px;background:linear-gradient(90deg,#eef4fa 0,#eef4fa 1px,#c4ccd8 1px,#bcc6d2 55%,#b2b6be)"></div>
<div class="abs" style="left:872px;top:34px;width:8px;height:120px;background:linear-gradient(#c9d5e5 0,#c9d5e5 50%,rgba(201,213,229,0))"></div>
<div class="abs" style="left:881px;top:8px;width:1px;height:587px;background:linear-gradient(#d4d4d4 0,#bdbdbd 20px,#8c8c8c 70px,#8c8c8c 100%)"></div>
<div class="abs" style="left:882px;top:12px;width:1px;height:583px;background:linear-gradient(#c4c4c4 0,#a4a4a4 20px,#8c8c8c 70px,#8c8c8c 100%)"></div>
<div id="below">
 <div class="abs" style="left:24px;top:0;width:1px;height:10px;background:#3c3c3c"></div>
 <div class="abs" style="left:25px;top:0;width:8px;height:10px;background:#c6d8ee"></div>
 <div class="abs" style="left:33px;top:0;width:709px;height:10px;background:#e1e1e1;overflow:hidden"><div id="desc">for the injector to operate. It varies with battery voltage and manifold vacuum.</div></div>
 <div class="abs" style="left:742px;top:0;width:7px;height:10px;background:#c6d8ee"></div>
 <div class="abs" style="left:650px;top:6px;font-weight:bold;font-size:12px;line-height:12px;white-space:nowrap;color:#111">0.0 - 400.0</div>
</div>
<!-- excel -->
<div id="xw"></div>
<div id="xwin"></div>

<div id="xtitle">FIC_873cc_83l</div>
<div id="xfile">File</div>
<div id="ribbon"></div>
<div id="xhome">Home</div>
<div class="xtab" style="left:1021px;letter-spacing:-0.17px">Insert</div>
<div class="xtab" style="left:1079px;letter-spacing:-0.58px">Page Layout</div>
<div class="xtab" style="left:1169px;letter-spacing:-0.4px">Formulas</div>
<div class="gsep" style="left:972px"></div>
<div class="gsep" style="left:1114px"></div>
<div class="glab" style="left:896px;letter-spacing:-0.1px">Clipboard</div>
<div class="glab" style="left:1023px;letter-spacing:-0.25px">Font</div>
<div class="glab" style="left:1136px;letter-spacing:-0.1px">Alignment</div>
<div class="abs" style="left:902px;top:101.500px;font-size:12px;color:#333;letter-spacing:-0.9px">Paste</div>
<div class="darr" style="left:912px;top:119px"></div>
<div class="combo" style="left:978px;width:91px">Calibri</div>
<div class="combo" style="left:1068px;width:44px">11</div>
<div class="darr" style="left:1058px;top:72px"></div>
<div class="darr" style="left:1101px;top:72px"></div>
<div class="abs" style="left:984px;top:88px;font-family:'Liberation Serif',serif;font-weight:bold;font-size:15px;line-height:16px">B</div>
<div class="abs" style="left:1009px;top:88px;font-family:'Liberation Serif',serif;font-weight:bold;font-style:italic;font-size:15px;line-height:16px">I</div>
<div class="abs" style="left:1030px;top:88px;font-family:'Liberation Serif',serif;font-weight:bold;font-size:14px;line-height:16px;text-decoration:underline">U</div>
<div class="darr" style="left:1048px;top:94px"></div>
<div class="abs" style="left:1062px;top:87px;width:1px;height:19px;background:#c9d0da"></div>
<div class="abs" style="left:1071px;top:86px;font-family:'Liberation Serif',serif;font-weight:bold;font-size:17px;line-height:18px;color:#333">A</div>
<div class="abs" style="left:1094px;top:89px;font-family:'Liberation Serif',serif;font-weight:bold;font-size:13px;line-height:15px;color:#333">A</div>
<div class="abs" style="left:1081px;top:88px;width:0;height:0;border-left:3px solid transparent;border-right:3px solid transparent;border-bottom:3px solid #2a4d9b"></div>
<div class="abs" style="left:1102px;top:90px;width:0;height:0;border-left:3px solid transparent;border-right:3px solid transparent;border-top:3px solid #2a4d9b"></div>
<div class="abs" style="left:984px;top:112px;width:13px;height:13px;border:1px dotted #555;border-bottom:2px solid #111"></div><div class="abs" style="left:990px;top:113px;width:1px;height:10px;border-left:1px dotted #666"></div><div class="abs" style="left:985px;top:117px;width:11px;height:1px;border-top:1px dotted #666"></div>
<div class="darr" style="left:1003px;top:116px"></div>
<div class="abs" style="left:1017px;top:109px;width:1px;height:19px;background:#c9d0da"></div>
<div class="abs" style="left:1026px;top:122px;width:16px;height:4px;background:#ffff00"></div>
<div class="abs" style="left:1059px;top:122px;width:16px;height:4px;background:#ffff00"></div>
<div class="abs" style="left:1060px;top:107px;font-family:'Liberation Serif',serif;font-weight:bold;font-size:17px;line-height:18px;color:#2a4d9b">A</div>
<div class="darr" style="left:1046px;top:116px"></div>
<div class="darr" style="left:1079px;top:116px"></div>
<div class="hl" style="left:1168px;top:63px;width:22px;height:22px"></div>
<div class="hl" style="left:1144px;top:85px;width:24px;height:22px"></div>
<svg class="abs" style="left:883px;top:0" width="314" height="200" viewBox="883 0 314 200">
<defs>
<linearGradient id="xgx" x1="0" y1="0" x2="1" y2="1"><stop offset="0" stop-color="#f4fbf0"/><stop offset="1" stop-color="#bfe3b4"/></linearGradient>
<linearGradient id="xgp" x1="0" y1="0" x2="0" y2="1"><stop offset="0" stop-color="#fff"/><stop offset="1" stop-color="#dfe7f5"/></linearGradient>
<linearGradient id="xgd" x1="0" y1="0" x2="0" y2="1"><stop offset="0" stop-color="#f4f8ff"/><stop offset="1" stop-color="#aac2ee"/></linearGradient>
<g id="launch"><path d="M.5 5V.5H5" stroke="#8d96a4" fill="none"/><path d="M3 3l3.500 3.500M6.500 3.500v3h-3" stroke="#7b8594" fill="none"/></g>
</defs>
<!-- excel logo -->
<rect x="892.500" y="16.500" width="15" height="15" rx="2" fill="url(#xgx)" stroke="#2f7d34"/>
<path d="M895.500 19.500 L898.500 19.500 L900.300 22.500 L902.300 19.500 L905 19.500 L901.700 24.300 L905.300 29.500 L902.300 29.500 L900.200 26.200 L898 29.500 L895.200 29.500 L898.800 24.300Z" fill="#2d7a2f"/>
<path d="M900.300 22.500 L902.300 19.500 L905 19.500 L901.700 24.300Z" fill="#1c5a24"/>
<path d="M912.500 18v13M1005.500 18v13" stroke="#8d9bb0"/>
<!-- save -->
<rect x="920" y="17" width="14" height="14" rx="1" fill="#4a4eb8"/>
<rect x="922.500" y="17.500" width="9" height="7" fill="#f4f6ff"/>
<rect x="923.500" y="26.500" width="7" height="4.500" fill="#cdd2ee"/>
<rect x="924.500" y="27.300" width="2.600" height="3.700" fill="#2f3390"/>
<!-- undo / redo -->
<path d="M943.500 19.500 L944.500 25.500 L950 24 L947.800 22.700 Q950.500 21 952 23.200 Q953.200 26 949.800 29 L951.300 30 Q956 26 953.800 21.800 Q951 18.500 946 21.500Z" fill="#a8adb6"/>
<path d="M986 19.500 L985 25.500 L979.500 24 L981.700 22.700 Q979 21 977.500 23.200 Q976.300 26 979.700 29 L978.200 30 Q973.500 26 975.700 21.800 Q978.500 18.500 983.500 21.500Z" fill="#a8adb6"/>
<path d="M961 23h6l-3 3zM993 23h6l-3 3z" fill="#a3a9b3"/>
<path d="M1010 21.500h7" stroke="#222" stroke-width="1.300"/><path d="M1010 24h7l-3.500 3.500z" fill="#222"/>
<!-- paste big -->
<rect x="903.500" y="69.500" width="23" height="26" rx="2" fill="#f0c373" stroke="#d1a048"/>
<path d="M909.500 71.500 h11 v-2 q0-1-1-1 h-2.500 q-.5-2-2-2 q-1.500 0-2 2 h-2.500 q-1 0-1 1z" fill="#e6e6e6" stroke="#9a9a9a" stroke-width=".8"/>
<path d="M912.500 78.500 h12 l5 5 v13 h-17z" fill="url(#xgp)" stroke="#a8b0bd" stroke-width=".9"/>
<path d="M924.500 78.500 v5 h5" fill="#e8edf5" stroke="#a8b0bd" stroke-width=".8"/>
<path d="M915 84.500h8M915 86.500h12M915 88.500h12M915 90.500h12M915 92.500h12" stroke="#c9d2e2" stroke-width=".9"/>
<!-- scissors -->
<path d="M943.500 67.500 L948.500 76.500 M951.500 67.500 L946 76.500" stroke="#7d8aa0" stroke-width="1.400"/>
<circle cx="945" cy="78.500" r="2" fill="none" stroke="#2d4fb0" stroke-width="1.500"/><circle cx="950" cy="78.500" r="2" fill="none" stroke="#2d4fb0" stroke-width="1.500"/>
<!-- copy small -->
<path d="M940.500 89.500 h5.500 l2.500 2.500 v7 h-8z" fill="url(#xgd)" stroke="#6f88c0" stroke-width=".9"/>
<path d="M945.500 92.500 h5.500 l3 3 v7 h-8.500z" fill="url(#xgd)" stroke="#5d78b8" stroke-width=".9"/>
<path d="M947.500 97.500h4.500M947.500 99.500h4.500" stroke="#6a86cc" stroke-width=".8"/>
<path d="M959.500 94h5l-2.500 3z" fill="#666"/>
<!-- brush -->
<path d="M940.500 119.500 L947 114.500 L951.500 119 L948.500 124.500 Q944 125.500 940.500 119.500Z" fill="#f2d264" stroke="#b89a30" stroke-width=".8"/>
<path d="M947.500 114 L950 112 L953 115.500 L951.500 118.500Z" fill="#b0b4bc" stroke="#7a7e88" stroke-width=".6"/>
<path d="M950.500 112 L954.500 110.500 Q956.500 111 955.500 113 L953 115.800Z" fill="#5a4aa8"/>
<use href="#launch" x="960" y="136"/><use href="#launch" x="1103" y="136"/>
<!-- fill bucket -->
<path d="M1030.500 113.500 L1035.500 110.500 L1041 117 L1034 121.500 L1029 116Z" fill="#f4f7fc" stroke="#555c68" stroke-width=".9"/>
<path d="M1031.500 115 L1036 112.500 L1039.500 117 L1034.500 120Z" fill="#a9c4ec"/>
<path d="M1033.500 110 q1.500-2 3 0 v4" fill="none" stroke="#555c68" stroke-width=".8"/>
<path d="M1040.500 116.500 q2.500 2 1.300 5 q-2-1-1.300-5z" fill="#3a66c4"/>
<!-- alignment lines -->
<g stroke="#111" stroke-width="1">
<path d="M1126 67.5h14M1127 69.5h12M1126 71.5h14M1127 73.5h12"/>
<path d="M1149 71.5h14M1150 73.5h12M1149 75.5h14M1150 77.5h12"/>
<path d="M1172 74.5h14M1173 76.5h12M1172 78.5h14M1173 80.5h12"/>
<path d="M1126 90.5h14M1126 92.5h10M1126 94.5h14M1126 96.5h10M1126 98.5h14M1126 100.5h10"/>
<path d="M1149 90.5h14M1151 92.5h10M1149 94.5h14M1151 96.5h10M1149 98.5h14M1151 100.5h10"/>
<path d="M1172 90.5h14M1176 92.5h10M1172 94.5h14M1176 96.5h10M1172 98.5h14M1176 100.5h10"/>
<path d="M1134 112.500h7M1134 121.500h7M1127 121.500h4M1127 124.500h4M1134 124.500h5"/>
<path d="M1156 112.500h7M1156 121.500h7M1149 121.500h4M1149 124.500h4M1156 124.500h5"/>
<path d="M1135 116h5M1135 119h5M1157 116h5M1157 119h5" stroke-width="2"/>
</g>
<path d="M1132.500 110v16M1154.500 110v16" stroke="#111" stroke-dasharray="1 1"/>
<path d="M1125.500 117.500h5.500M1125.500 117.500l2.500-2.500M1125.500 117.500l2.500 2.500" stroke="#3a62c8" stroke-width="1.300" fill="none"/>
<path d="M1147 117.500h5.500M1152.500 117.500l-2.500-2.500M1152.500 117.500l-2.500 2.500" stroke="#3a62c8" stroke-width="1.300" fill="none"/>
<path d="M1170.500 109v19" stroke="#c9d0da"/>
<path d="M1186 126.500 L1196 116.500 M1196.500 116 h-3.500 M1196.500 116 v3.500" stroke="#333" stroke-width="1" fill="none"/>
<rect x="1195.500" y="65" width="2" height="15" fill="#7fa4e0"/><rect x="1195.500" y="90" width="2" height="13" fill="#7fa4e0"/>
</svg>
<div class="abs" style="left:1179px;top:109px;font-size:11px;line-height:12px;transform:rotate(-45deg);color:#111;letter-spacing:-0.5px">ab</div>

<div id="fbar"></div>
<div id="pill"></div>
<div class="abs" style="left:951px;top:155px;font-size:12px;line-height:16px;color:#111;letter-spacing:-0.1px">B35</div>
<div class="darr" style="left:1038px;top:161px;border-left-width:4px;border-right-width:4px;border-top-width:4px;border-top-color:#333"></div>
<div class="abs" style="left:1056px;top:156px;width:10px;height:10px;border-radius:5px;background:radial-gradient(circle at 40% 35%,#d8dade,#a9adb4)"></div>
<div class="abs" style="left:1117px;top:152px;font-family:'Liberation Serif',serif;font-style:italic;font-weight:bold;font-size:15px;line-height:18px;color:#333">f<span style="font-size:10px">x</span></div>
<div class="abs" style="left:1136px;top:152px;width:80px;height:20px;background:#fff"></div>
<div class="abs" style="left:1144px;top:155px;font-size:13px;line-height:16px;color:#111">0</div>
<div id="colh"></div>
<div class="abs" style="left:891px;top:177px;width:27px;height:12px;background:#e4e6ea;border-right:1px solid #b5bcc8"></div>
<div class="abs" style="left:918px;top:177px;width:181px;height:12px;font-size:11px;line-height:12px;text-align:center;color:#333">A</div>
<div class="abs" style="left:1100px;top:177px;width:85px;height:13px;background:#a8a8a8;font-size:11px;line-height:12px;text-align:center;color:#333">B</div>
<div class="abs" style="left:1185px;top:177px;width:1px;height:12px;background:#c0c4cc"></div>
<div class="abs" style="left:884px;top:16px;width:1px;height:580px;background:#e6f1fc"></div><div class="abs" style="left:889px;top:62px;width:1px;height:540px;background:#e6f1fc"></div>
<div class="abs" style="left:891px;top:173px;width:306px;height:3px;background:#eef2f8"></div>
<div class="abs" style="left:910px;top:182px;width:0;height:0;border-left:5px solid transparent;border-bottom:5px solid #b8bcc4"></div>
<div id="xsheet">
<div class="xr first" style="top:189px"><div class="xn">35</div><div class="xa">Manifold Vacuum kPa {link: GM.MANVAC</div><div class="xb"><b>0</b></div></div>
<div class="xr" style="top:203px"><div class="xn">36</div><div class="xa">4.5</div><div class="xb"><b>5.76213</b><i>5.76791</i></div></div>
<div class="xr" style="top:217px"><div class="xn">37</div><div class="xa">5</div><div class="xb"><b>5.24381</b><i>5.24910</i></div></div>
<div class="xr" style="top:231px"><div class="xn">38</div><div class="xa">5.5</div><div class="xb"><b>4.757885</b><i>4.76081</i></div></div>
<div class="xr" style="top:245px"><div class="xn">39</div><div class="xa">6</div><div class="xb"><b>4.304355</b><i>4.30304</i></div></div>
<div class="xr" style="top:259px"><div class="xn">40</div><div class="xa">6.5</div><div class="xb"><b>3.882175</b><i>3.87579</i></div></div>
<div class="xr" style="top:273px"><div class="xn">41</div><div class="xa">7</div><div class="xb"><b>3.49239</b><i>3.49432</i></div></div>
<div class="xr" style="top:287px"><div class="xn">42</div><div class="xa">7.5</div><div class="xb"><b>3.133955</b></div></div>
<div class="xr" style="top:301px"><div class="xn">43</div><div class="xa">8</div><div class="xb"><b>2.807915</b><i>2.80766</i></div></div>
<div class="xr" style="top:315px"><div class="xn">44</div><div class="xa">8.5</div><div class="xb"><b>2.513225</b><i>2.51774</i></div></div>
<div class="xr" style="top:329px"><div class="xn">45</div><div class="xa">9</div><div class="xb"><b>2.25093</b></div></div>
<div class="xr" style="top:343px"><div class="xn">46</div><div class="xa">9.5</div><div class="xb"><b>2.02103</b><i>2.01419</i></div></div>
<div class="xr" style="top:357px"><div class="xn">47</div><div class="xa">10</div><div class="xb"><b>1.82248</b></div></div>
<div class="xr" style="top:371px"><div class="xn">48</div><div class="xa">10.5</div><div class="xb"><b>1.66364</b></div></div>
<div class="xr" style="top:385px"><div class="xn">49</div><div class="xa">11</div><div class="xb"><b>1.541375</b></div></div>
<div class="xr" style="top:399px"><div class="xn">50</div><div class="xa">11.5</div><div class="xb"><b>1.4421</b></div></div>
<div class="xr" style="top:413px"><div class="xn">51</div><div class="xa">12</div><div class="xb"><b>1.34805</b></div></div>
<div class="xr" style="top:427px"><div class="xn">52</div><div class="xa">12.5</div><div class="xb"><b>1.26027</b></div></div>
<div class="xr" style="top:441px"><div class="xn">53</div><div class="xa">13</div><div class="xb"><b>1.18503</b></div></div>
<div class="xr" style="top:455px"><div class="xn">54</div><div class="xa">13.5</div><div class="xb"><b>1.119195</b></div></div>
<div class="xr" style="top:469px"><div class="xn">55</div><div class="xa">14</div><div class="xb"><b>1.05754</b></div></div>
<div class="xr" style="top:483px"><div class="xn">56</div><div class="xa">14.5</div><div class="xb"><b>1.000065</b></div></div>
<div class="xr" style="top:497px"><div class="xn">57</div><div class="xa">15</div><div class="xb"><b>0.947815</b><i>0.94606</i></div></div>
<div class="xr" style="top:511px"><div class="xn">58</div><div class="xa">15.5</div><div class="xb"><b>0.901835</b><i>0.90028</i></div></div>
<div class="xr" style="top:525px"><div class="xn">59</div><div class="xa">16</div><div class="xb"><b>0.862125</b><i>0.85451</i></div></div>
<div class="xr" style="top:539px"><div class="xn">60</div><div class="xa">16.5</div><div class="xb"><b>0.82764</b><i>0.82399</i></div></div>
<div class="xr" style="top:553px"><div class="xn">61</div><div class="xa">17</div><div class="xb"><b>0.80047</b><i>0.79347</i></div></div>
<div class="xr" style="top:567px"><div class="xn">62</div><div class="xa">17.5</div><div class="xb"><b>0.77748</b><i>0.77821</i></div></div>
<div class="xr" style="top:581px"><div class="xn">63</div><div class="xa">18</div><div class="xb"><b>0.761805</b><i>0.76295</i></div></div>
</div>
<div class="abs" style="left:1098px;top:189px;width:3px;height:406px;background:linear-gradient(90deg,#777,#333 40%,#444 70%,#888)"></div>
<div class="abs" style="left:1183px;top:203px;width:3px;height:392px;background:#636363"></div>
<div class="abs" style="left:1098px;top:189px;width:3px;height:14px;background:#000"></div>
<div class="abs" style="left:1183px;top:191px;width:4px;height:5px;background:#000"></div>
<div class="abs" style="left:1184px;top:197px;width:2px;height:6px;background:#000"></div>
</body></html>
